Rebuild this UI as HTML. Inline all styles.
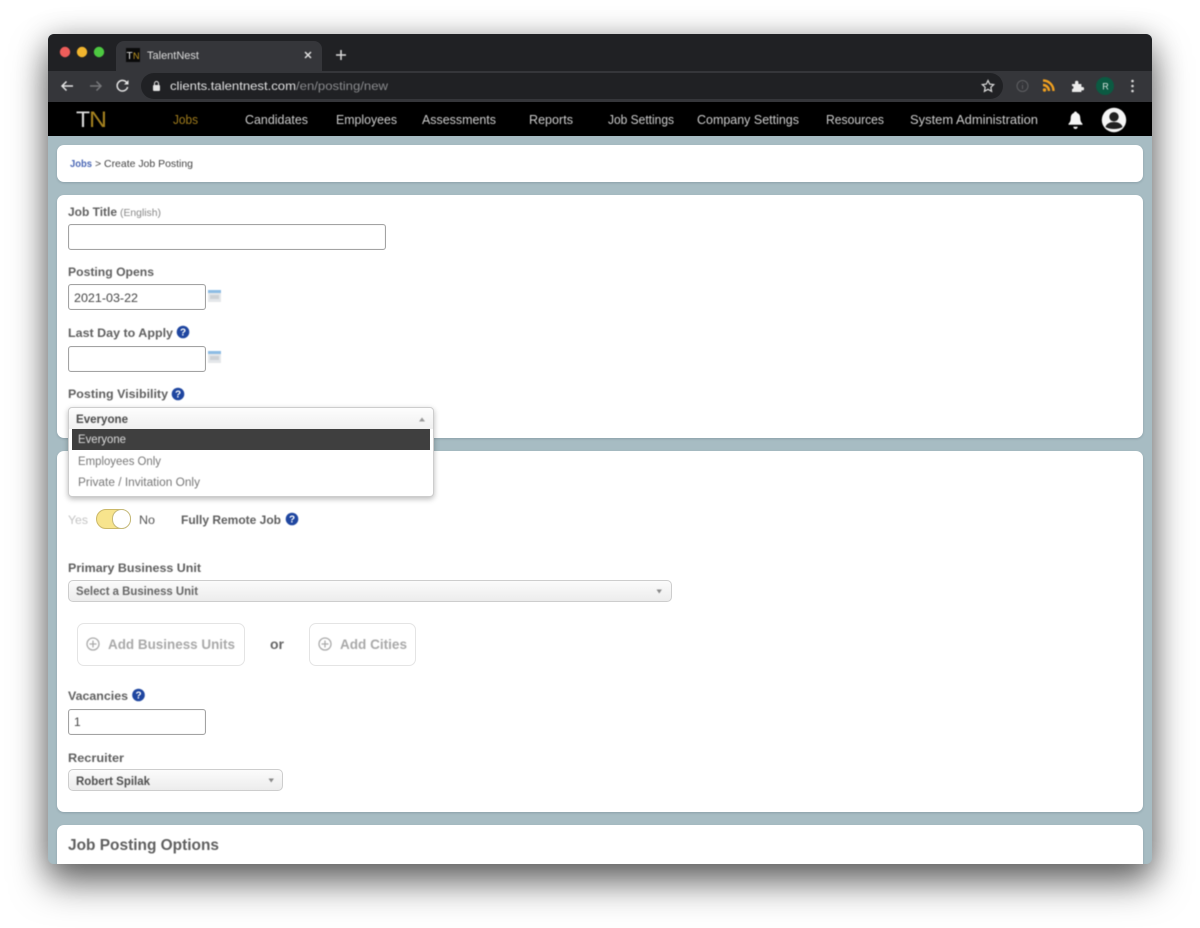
<!DOCTYPE html>
<html><head><meta charset="utf-8"><title>TalentNest</title>
<style>
html,body{margin:0;padding:0;background:#fff;width:1200px;height:928px;overflow:hidden}
.a{position:absolute;box-sizing:border-box}
#win{left:48px;top:34px;width:1104px;height:830px;border-radius:6px;box-shadow:0 20px 36px rgba(0,0,0,.5),0 4px 30px rgba(0,0,0,.3);background:#a7bcc3}
#clip{left:48px;top:34px;width:1104px;height:830px;border-radius:6px;overflow:hidden;background:#a7bcc3;filter:blur(.3px)}
.card{background:#fff;border-radius:7px;left:9px;width:1086px;box-shadow:0 1px 2px rgba(60,80,90,.25)}
.inp{background:#fff;border:1.5px solid #a3a3a3;border-radius:3px;box-shadow:inset 0 0 1px #ccc}
.sel{background:linear-gradient(#fbfbfb,#ececec);border:1.5px solid #cdcdcd;border-radius:5px}
.btn{background:#fff;border:1px solid #e4e4e4;border-radius:7px}
svg text{font-family:"Liberation Sans",Arial,sans-serif}
#t{left:0;top:0;filter:blur(.45px)}
</style></head><body>
<div class="a" id="win"></div>
<div class="a" id="clip">
  <div class="a" style="left:0;top:0;width:1104px;height:37px;background:#202124"></div>
  <div class="a" style="left:68px;top:7px;width:206px;height:30px;background:#35363a;border-radius:8px 8px 0 0"></div>
  <div class="a" style="left:0;top:37px;width:1104px;height:31px;background:#35363a"></div>
  <div class="a" style="left:93px;top:39px;width:862px;height:26px;background:#202124;border-radius:13px"></div>
  <div class="a" style="left:0;top:68px;width:1104px;height:34px;background:#000"></div>
  <div class="a card" style="top:111px;height:37px"></div>
  <div class="a card" style="top:161px;height:243px"></div>
  <div class="a card" style="top:417px;height:361px"></div>
  <div class="a card" style="top:791px;height:60px"></div>
  <div class="a inp" style="left:20px;top:190px;width:318px;height:26px"></div>
  <div class="a inp" style="left:20px;top:250px;width:138px;height:26px"></div>
  <div class="a inp" style="left:20px;top:312px;width:138px;height:26px"></div>
  <div class="a inp" style="left:20px;top:675px;width:138px;height:26px"></div>
  <div class="a sel" style="left:20px;top:546px;width:604px;height:22px"></div>
  <div class="a sel" style="left:20px;top:735px;width:215px;height:22px"></div>
  <div class="a btn" style="left:29px;top:589px;width:168px;height:43px"></div>
  <div class="a btn" style="left:261px;top:589px;width:107px;height:43px"></div>
  <div class="a" style="left:48px;top:475px;width:35px;height:20px;border-radius:10px;background:#f7e48d;border:1px solid #cbb868;box-sizing:border-box"></div>
  <div class="a" style="left:64px;top:475px;width:19px;height:20px;border-radius:10px;background:#fff;border:1px solid #c5b97a;box-sizing:border-box"></div>
  <div class="a" style="left:20px;top:373px;width:366px;height:90px;background:#fff;border:1px solid #cdcdcd;border-radius:4px;box-shadow:0 2px 6px rgba(0,0,0,.28)"></div>
  <div class="a" style="left:21px;top:374px;width:364px;height:21px;background:linear-gradient(#fdfdfd,#f0f0f0);border-radius:4px 4px 0 0"></div>
  <div class="a" style="left:24px;top:395px;width:358px;height:21px;background:#3f3f3f"></div>
</div>
<svg class="a" id="t" width="1200" height="928" viewBox="0 0 1200 928" xmlns="http://www.w3.org/2000/svg">
  <!-- traffic lights -->
  <circle cx="65" cy="52" r="5.2" fill="#ee5d5a"/><circle cx="82" cy="52" r="5.2" fill="#f1b52e"/><circle cx="99" cy="52" r="5.2" fill="#4dc941"/>
  <!-- favicon -->
  <rect x="126" y="48" width="14" height="14" fill="#0a0a0a"/>
  <text x="126.5" y="59" font-size="10" fill="#eee">T</text><text x="133" y="59" font-size="9" fill="#c49a22">N</text>
  <text x="147" y="59" font-size="11" fill="#dcdcdc" textLength="52" lengthAdjust="spacingAndGlyphs">TalentNest</text>
  <path d="M305 52l6 6m0-6l-6 6" stroke="#e0e0e0" stroke-width="1.500" fill="none"/>
  <path d="M341 50v10m-5-5h10" stroke="#dcdcdc" stroke-width="1.500" fill="none"/>
  <!-- toolbar icons -->
  <path d="M73 86H62m4.500-4.500L62 86l4.500 4.500" stroke="#e4e4e4" stroke-width="1.500" fill="none"/>
  <path d="M90 86h11m-4.500-4.500L101 86l-4.500 4.500" stroke="#77787b" stroke-width="1.500" fill="none"/>
  <path d="M127 83a5.300 5.300 0 1 0 .6 4" stroke="#e4e4e4" stroke-width="1.500" fill="none"/><path d="M128.500 80v4.500H124z" fill="#e4e4e4"/>
  <rect x="153" y="85" width="7" height="6" rx="1" fill="#e4e4e4"/><path d="M154.500 85v-1.500a2 2 0 0 1 4 0V85" stroke="#e4e4e4" stroke-width="1" fill="none"/>
  <text x="170" y="90" font-size="12" fill="#e2e2e3" textLength="126" lengthAdjust="spacingAndGlyphs">clients.talentnest.com</text>
  <text x="296" y="90" font-size="12" fill="#8a8b8e" textLength="92" lengthAdjust="spacingAndGlyphs">/en/posting/new</text>
  <path d="M988 80.500l1.700 3.600 4 .5-2.900 2.700.8 4-3.600-2-3.600 2 .8-4-2.900-2.700 4-.5z" stroke="#dcdcdc" stroke-width="1.200" fill="none"/>
  <circle cx="1022.500" cy="86" r="5.500" stroke="#5f6063" fill="none"/><path d="M1022.500 85v4m0-5.500v-.8" stroke="#5f6063"/>
  <circle cx="1044.500" cy="90" r="1.700" fill="#f0a020"/><path d="M1043 85a6 6 0 0 1 6 6M1043 80.500a10.500 10.500 0 0 1 10.500 10.500" stroke="#f0a020" stroke-width="2.400" fill="none"/>
  <path d="M1072 84h3v-1.500a1.700 1.700 0 0 1 3.400 0V84h3v3h1a1.700 1.700 0 0 1 0 3.400h-1V92h-9.400v-3a1.500 1.500 0 0 0 0-3z" fill="#ececec"/>
  <circle cx="1105" cy="86" r="9" fill="#0b5a42"/><text x="1102.300" y="89.500" font-size="9" fill="#d5e5de">R</text>
  <circle cx="1132.500" cy="81" r="1.300" fill="#dcdcdc"/><circle cx="1132.500" cy="86" r="1.300" fill="#dcdcdc"/><circle cx="1132.500" cy="91" r="1.300" fill="#dcdcdc"/>
  <!-- nav -->
  <text x="76" y="127" font-size="22" fill="#dcdcdc" textLength="14" lengthAdjust="spacingAndGlyphs">T</text>
  <text x="89" y="127" font-size="22" fill="#a5821f" textLength="18" lengthAdjust="spacingAndGlyphs">N</text>
  <g font-size="12.500" fill="#cccccc">
    <text x="173" y="124" fill="#a07c1c" textLength="25" lengthAdjust="spacingAndGlyphs">Jobs</text>
    <text x="245" y="124" textLength="63" lengthAdjust="spacingAndGlyphs">Candidates</text>
    <text x="336" y="124" textLength="61" lengthAdjust="spacingAndGlyphs">Employees</text>
    <text x="422" y="124" textLength="74" lengthAdjust="spacingAndGlyphs">Assessments</text>
    <text x="529" y="124" textLength="44" lengthAdjust="spacingAndGlyphs">Reports</text>
    <text x="608" y="124" textLength="66" lengthAdjust="spacingAndGlyphs">Job Settings</text>
    <text x="697" y="124" textLength="102" lengthAdjust="spacingAndGlyphs">Company Settings</text>
    <text x="826" y="124" textLength="58" lengthAdjust="spacingAndGlyphs">Resources</text>
    <text x="910" y="124" textLength="128" lengthAdjust="spacingAndGlyphs">System Administration</text>
  </g>
  <path d="M1075.500 111.500c-.9 0-1.500.6-1.500 1.400-2.500.8-3.300 3-3.300 5.600 0 2.500-.9 4-2.200 5.300v1h14v-1c-1.300-1.300-2.200-2.800-2.200-5.300 0-2.600-.8-4.800-3.300-5.600 0-.8-.6-1.400-1.500-1.400z" fill="#f5f5f5"/><path d="M1073.300 126.800a2.200 2.200 0 0 0 4.400 0z" fill="#f5f5f5"/>
  <circle cx="1114" cy="120" r="12.200" fill="#f6f6f6"/><circle cx="1114" cy="116.800" r="4.700" fill="#222"/><path d="M1105.500 127c1-3.500 4.500-5 8.500-5s7.500 1.500 8.500 5c-2 1.300-5 2-8.500 2s-6.500-.7-8.500-2z" fill="#222"/>
  <!-- breadcrumb -->
  <text x="70" y="167" font-size="10.500" font-weight="bold" fill="#4a67b5" textLength="22" lengthAdjust="spacingAndGlyphs">Jobs</text>
  <text x="95" y="167" font-size="10.500" fill="#444" textLength="98" lengthAdjust="spacingAndGlyphs">&gt; Create Job Posting</text>
  <!-- labels -->
  <g font-size="12" font-weight="bold" fill="#5f5f5f">
    <text x="68" y="216" textLength="49" lengthAdjust="spacingAndGlyphs">Job Title</text>
    <text x="68" y="276" textLength="86" lengthAdjust="spacingAndGlyphs">Posting Opens</text>
    <text x="68" y="337" textLength="105" lengthAdjust="spacingAndGlyphs">Last Day to Apply</text>
    <text x="68" y="398" textLength="100" lengthAdjust="spacingAndGlyphs">Posting Visibility</text>
    <text x="181" y="524" textLength="100" lengthAdjust="spacingAndGlyphs">Fully Remote Job</text>
    <text x="68" y="572" textLength="133" lengthAdjust="spacingAndGlyphs">Primary Business Unit</text>
    <text x="68" y="700" textLength="60" lengthAdjust="spacingAndGlyphs">Vacancies</text>
    <text x="68" y="762" textLength="56" lengthAdjust="spacingAndGlyphs">Recruiter</text>
  </g>
  <text x="120" y="216" font-size="10" fill="#888" textLength="41" lengthAdjust="spacingAndGlyphs">(English)</text>
  <text x="74" y="302" font-size="12" fill="#444" textLength="64" lengthAdjust="spacingAndGlyphs">2021-03-22</text>
  <text x="74" y="726" font-size="12" fill="#444">1</text>
  <!-- calendars -->
  <rect x="208" y="290" width="13" height="12" fill="#e4e7ea"/><rect x="208" y="290" width="13" height="3" fill="#8dbce4"/><rect x="210" y="295" width="9" height="4" fill="#cdd1d5"/>
  <rect x="208" y="351" width="13" height="12" fill="#e4e7ea"/><rect x="208" y="351" width="13" height="3" fill="#8dbce4"/><rect x="210" y="356" width="9" height="4" fill="#cdd1d5"/>
  <!-- help icons -->
  <g font-size="10" font-weight="bold" text-anchor="middle" fill="#fff">
    <circle cx="183" cy="332" r="6.300" fill="#1f46a0"/><text x="183" y="335.500">?</text>
    <circle cx="178" cy="394" r="6.300" fill="#1f46a0"/><text x="178" y="397.500">?</text>
    <circle cx="292" cy="519" r="6.300" fill="#1f46a0"/><text x="292" y="522.500">?</text>
    <circle cx="138.500" cy="695" r="6.300" fill="#1f46a0"/><text x="138.500" y="698.500">?</text>
  </g>
  <!-- dropdown -->
  <text x="76" y="423" font-size="11.500" font-weight="bold" fill="#4a4a4a" textLength="52" lengthAdjust="spacingAndGlyphs">Everyone</text>
  <path d="M419 421.500l3-4 3 4z" fill="#999"/>
  <text x="78" y="443" font-size="11.500" fill="#ddd" textLength="48" lengthAdjust="spacingAndGlyphs">Everyone</text>
  <text x="78" y="465" font-size="11.500" fill="#777" textLength="83" lengthAdjust="spacingAndGlyphs">Employees Only</text>
  <text x="78" y="486" font-size="11.500" fill="#777" textLength="122" lengthAdjust="spacingAndGlyphs">Private / Invitation Only</text>
  <!-- toggle labels -->
  <text x="68" y="524" font-size="11.500" fill="#c4c4c4" textLength="20" lengthAdjust="spacingAndGlyphs">Yes</text>
  <text x="139" y="524" font-size="11.500" fill="#555" textLength="16" lengthAdjust="spacingAndGlyphs">No</text>
  <!-- selects -->
  <text x="76" y="595" font-size="11.500" font-weight="bold" fill="#666" textLength="122" lengthAdjust="spacingAndGlyphs">Select a Business Unit</text>
  <path d="M656.500 589.500l2.700 4 2.700-4z" fill="#888"/>
  <text x="76" y="785" font-size="11.500" font-weight="bold" fill="#4f4f4f" textLength="74" lengthAdjust="spacingAndGlyphs">Robert Spilak</text>
  <path d="M268.500 778.500l2.700 4 2.700-4z" fill="#888"/>
  <!-- buttons -->
  <g stroke="#aaa" stroke-width="1.300" fill="none">
    <circle cx="93" cy="644" r="6"/><path d="M93 640.500v7m-3.500-3.500h7"/>
    <circle cx="325" cy="644" r="6"/><path d="M325 640.500v7m-3.500-3.500h7"/>
  </g>
  <text x="108" y="649" font-size="13.500" font-weight="bold" fill="#a9a9a9" textLength="127" lengthAdjust="spacingAndGlyphs">Add Business Units</text>
  <text x="340" y="649" font-size="13.500" font-weight="bold" fill="#a9a9a9" textLength="67" lengthAdjust="spacingAndGlyphs">Add Cities</text>
  <text x="270" y="649" font-size="13.500" font-weight="bold" fill="#666" textLength="14" lengthAdjust="spacingAndGlyphs">or</text>
  <text x="68" y="850" font-size="16" font-weight="bold" fill="#5f5f5f" textLength="151" lengthAdjust="spacingAndGlyphs">Job Posting Options</text>
</svg>
</body></html>
